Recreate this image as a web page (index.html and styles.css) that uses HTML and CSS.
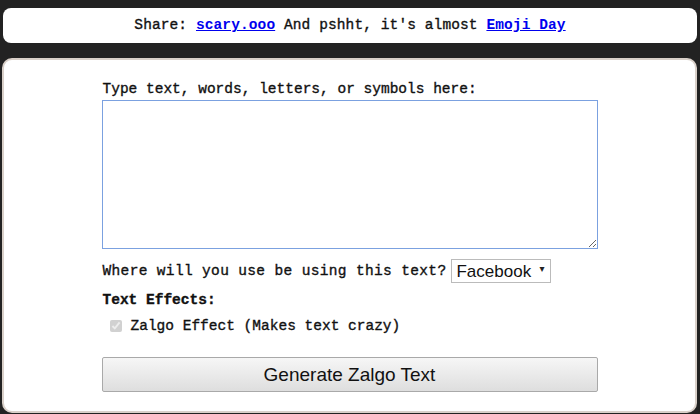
FILE: index.html
```html
<!DOCTYPE html>
<html>
<head>
<meta charset="utf-8">
<title>Zalgo Text Generator</title>
<link rel="stylesheet" href="styles.css">
</head>
<body>

  <div class="share">
    Share: <a href="#">scary.ooo</a> And pshht, it's almost <a href="#">Emoji Day</a>
  </div>

  <div class="panel">
    <div class="form">
      <label class="label" for="input">Type text, words, letters, or symbols here:</label>
      <textarea id="input" class="input"></textarea>

      <div class="where">
        <span class="ask">Where will you use be using this text?</span>
        <span class="pick">
          <select>
            <option>Facebook</option>
            <option>Twitter</option>
            <option>Other</option>
          </select>
        </span>
      </div>

      <div class="effects">Text Effects:</div>
      <label class="effect"><input type="checkbox" checked disabled> Zalgo Effect (Makes text crazy)</label>

      <button class="go">Generate Zalgo Text</button>
    </div>
  </div>

</body>
</html>
```

FILE: styles.css
```css
html, body {
  height: 100%;
}
body {
  margin: 0;
  padding: 8px 3px 0 2px;
  background-color: #222;
  font-family: "Liberation Mono", "DejaVu Sans Mono", monospace;
  font-size: 14.5px;
  color: #111;
  -webkit-text-stroke: 0.35px #111;
  overflow: hidden;
}

.share {
  margin: 0 0 0 1px;
  height: 35px;
  line-height: 35px;
  background: #fff;
  border-radius: 8px;
  text-align: center;
  letter-spacing: 0.1px;
}
.share a {
  color: #00e;
  font-weight: bold;
  -webkit-text-stroke: 0;
}

.panel {
  margin-top: 15px;
  height: 351px;
  background: #fff;
  border: 2px solid #d9d0c9;
  border-radius: 10px;
}

.form {
  width: 496px;
  margin: 0 auto;
  padding-top: 20px;
}

.label {
  display: block;
  line-height: 18px;
  margin-bottom: 2px;
  padding-left: 1px;
}

.input {
  display: block;
  box-sizing: border-box;
  width: 496px;
  height: 149px;
  margin: 0;
  border: 1px solid #7ba1e0;
  resize: vertical;
}

.where {
  display: flex;
  align-items: center;
  gap: 5px;
  margin-top: 10px;
  height: 24px;
  padding-left: 1px;
}
.ask {
  letter-spacing: 0.35px;
}

.pick {
  position: relative;
}
.pick select {
  appearance: none;
  box-sizing: border-box;
  width: 100px;
  height: 24px;
  padding: 0 14px 0 4px;
  border: 1px solid #bbb;
  border-radius: 0;
  background: #fff;
  font-family: "Liberation Sans", Arial, sans-serif;
  font-size: 17px;
  color: #111;
  -webkit-text-stroke: 0;
}
.pick::after {
  content: "\25BE";
  position: absolute;
  right: 7px;
  top: 4px;
  font-family: "DejaVu Sans", sans-serif;
  font-size: 10px;
  color: #222;
  -webkit-text-stroke: 0;
}

.effects {
  margin-top: 8px;
  line-height: 18px;
  font-weight: bold;
  padding-left: 1px;
}

.effect {
  display: flex;
  align-items: center;
  gap: 9px;
  line-height: 18px;
  margin-top: 8px;
  padding-left: 8px;
}
.effect input {
  margin: 0;
  width: 12px;
  height: 12px;
}

.go {
  display: block;
  width: 496px;
  height: 35px;
  margin-top: 22px;
  border: 1px solid #a9a9a9;
  border-radius: 2px;
  background: linear-gradient(#f6f6f6, #dedede);
  font-family: "Liberation Sans", Arial, sans-serif;
  font-size: 19px;
  color: #111;
  -webkit-text-stroke: 0;
}
```
